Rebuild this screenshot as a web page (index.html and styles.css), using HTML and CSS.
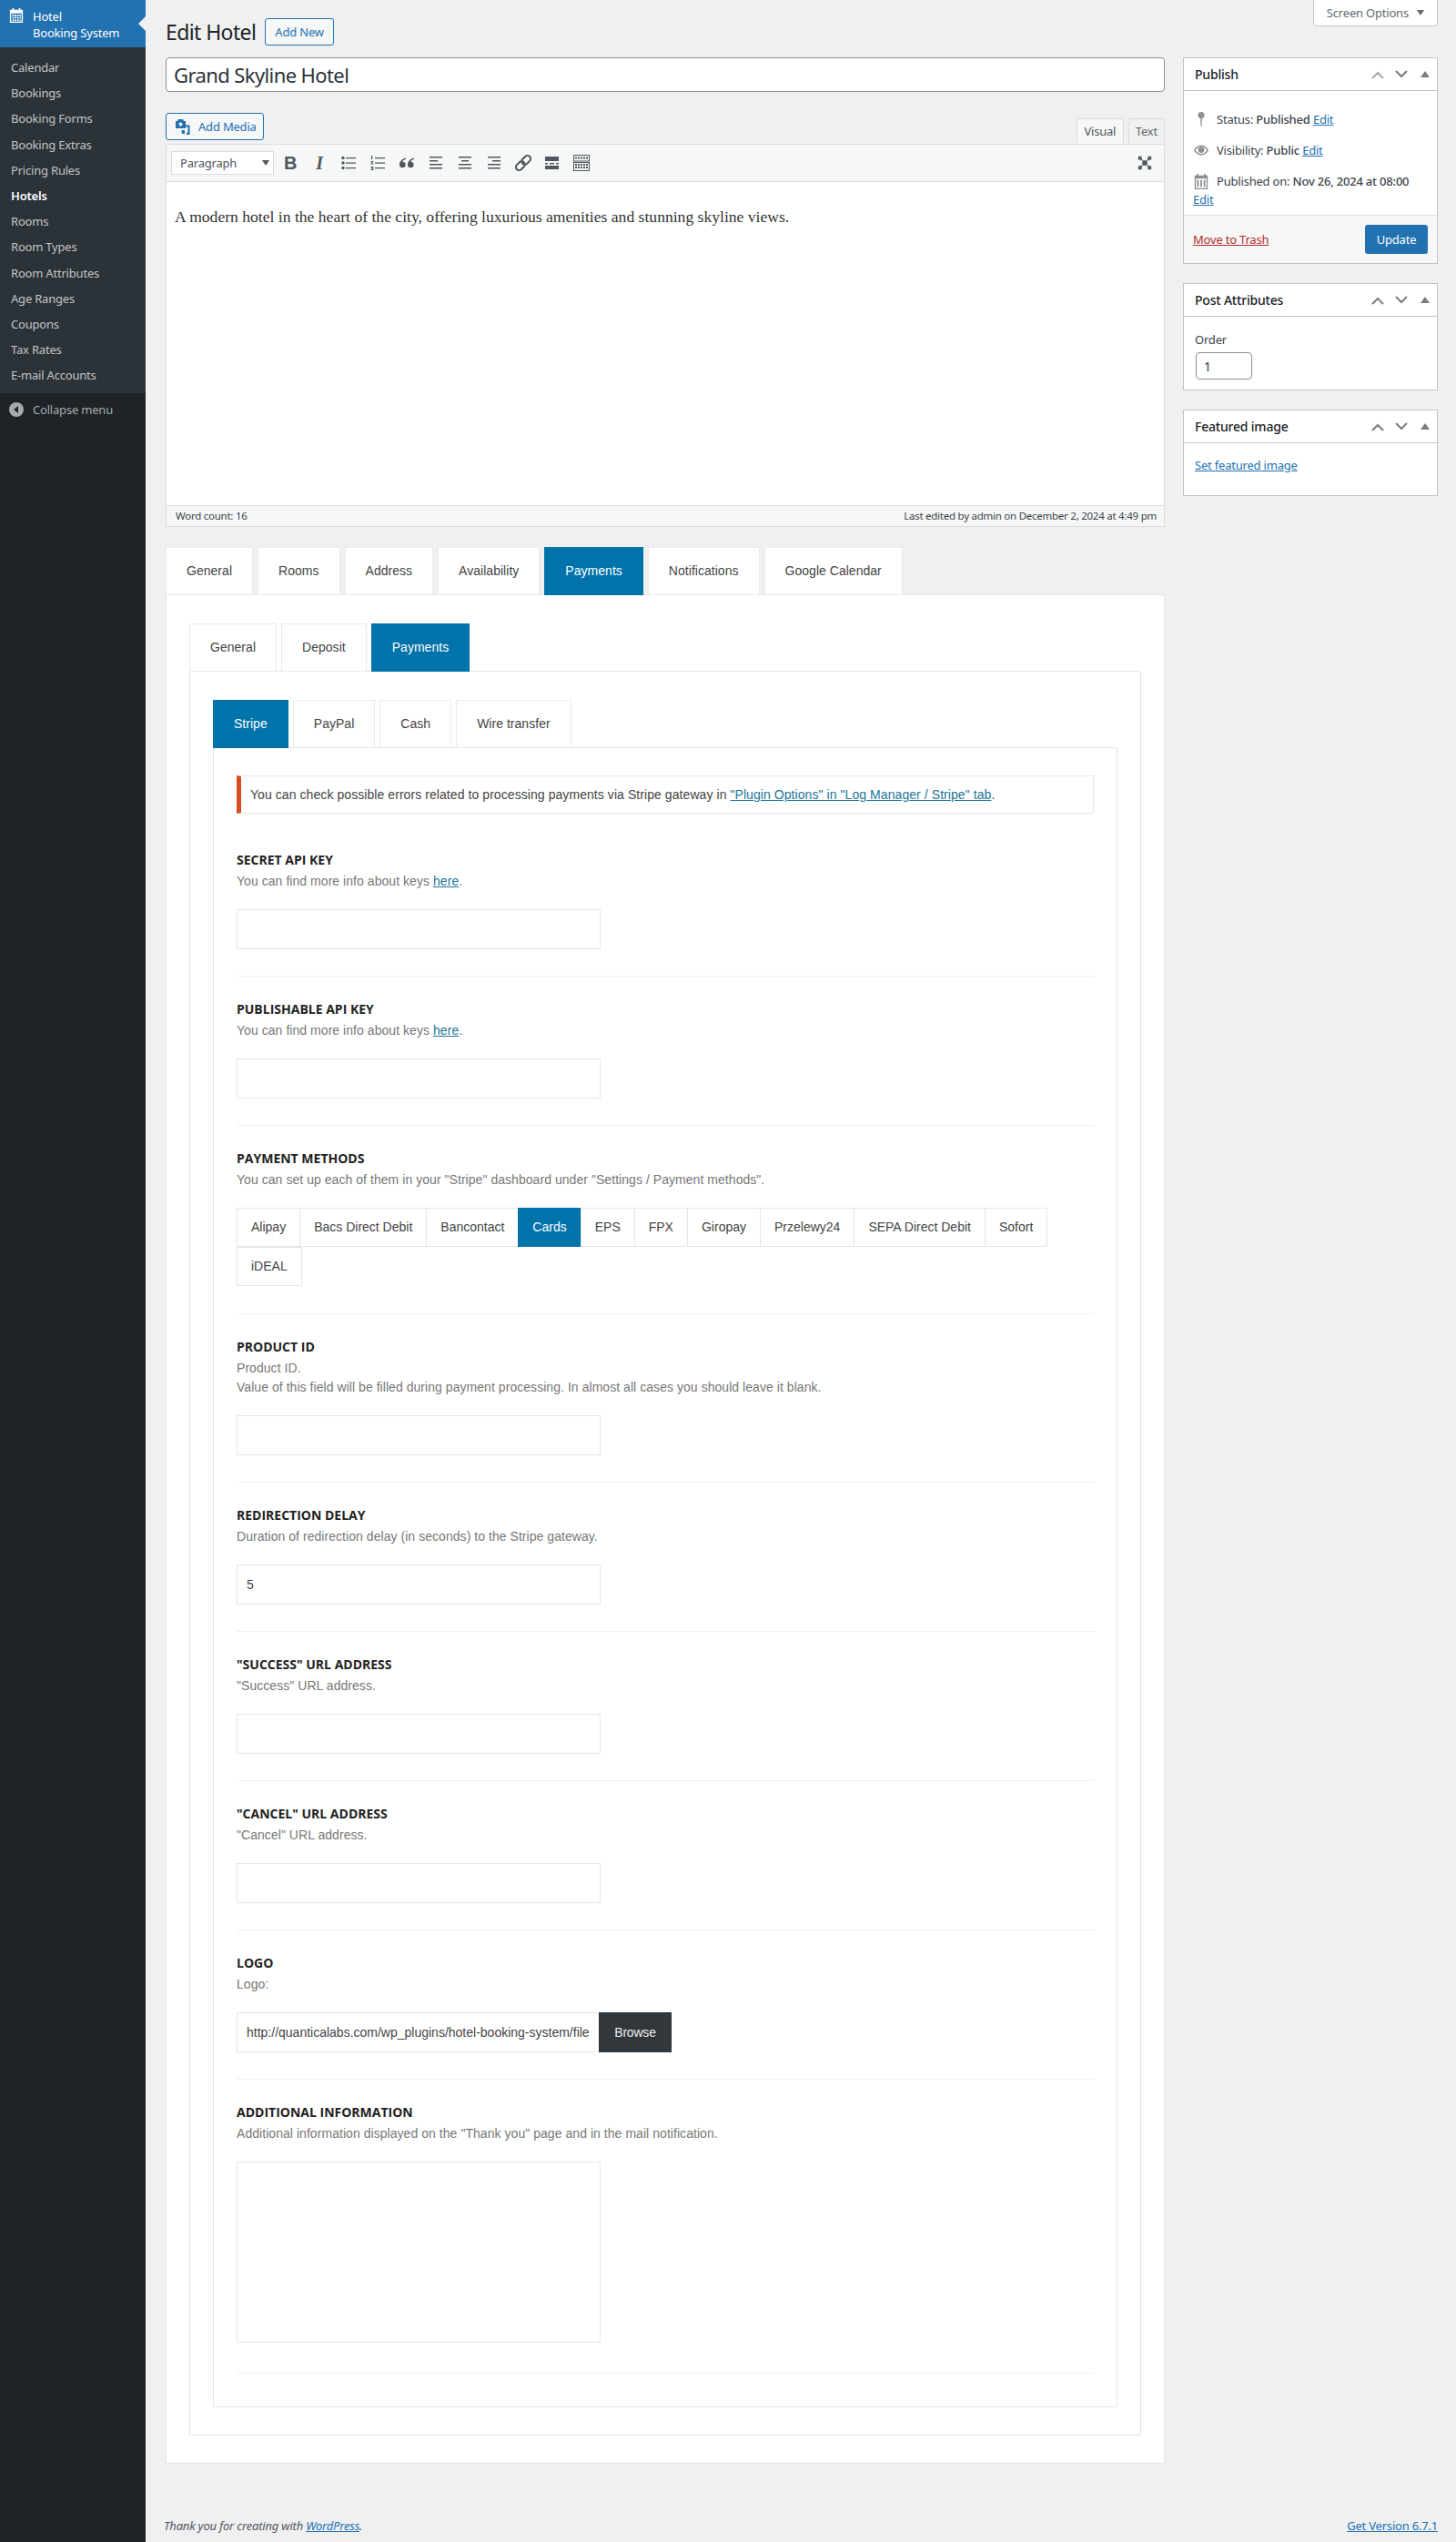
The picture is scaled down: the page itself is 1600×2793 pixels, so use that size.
FILE: index.html
```html
<!DOCTYPE html>
<html lang="en">
<head>
  <meta charset="UTF-8">
  <meta name="viewport" content="width=device-width, initial-scale=1.0">
  <title>Edit Hotel</title>
  <link rel="stylesheet" href="styles.css">
</head>
<body>

<svg class="sprites" width="0" height="0">
  <symbol id="i-up" viewBox="0 0 16 16"><path d="M2 12l6-6 6 6" fill="none" stroke="currentColor" stroke-width="2"/></symbol>
  <symbol id="i-down" viewBox="0 0 16 16"><path d="M2 4l6 6 6-6" fill="none" stroke="currentColor" stroke-width="2"/></symbol>
  <symbol id="i-tri" viewBox="0 0 16 16"><path d="M3 11l5-7 5 7z" fill="currentColor"/></symbol>
</svg>

<aside class="sidebar">
  <div class="brand">
    <svg class="brand-icon" viewBox="0 0 18 20" fill="#fff">
      <path fill-rule="evenodd" d="M1 3h3V1h2v2h6V1h2v2h3v16H1zM2.500 7.500v10h13v-10z"/>
      <path d="M4 9h2v2H4zM7 9h2v2H7zM10 9h2v2h-2zM13 9h1.500v2H13zM4 12h2v2H4zM7 12h2v2H7zM10 12h2v2h-2zM13 12h1.500v2H13zM4 15h2v2H4zM7 15h2v2H7zM10 15h2v2h-2zM13 15h1.500v2H13z"/>
    </svg>
    <div class="brand-name">Hotel<br>Booking System</div>
    <span class="brand-notch"></span>
  </div>
  <ul class="menu">
    <li>Calendar</li>
    <li>Bookings</li>
    <li>Booking Forms</li>
    <li>Booking Extras</li>
    <li>Pricing Rules</li>
    <li class="current">Hotels</li>
    <li>Rooms</li>
    <li>Room Types</li>
    <li>Room Attributes</li>
    <li>Age Ranges</li>
    <li>Coupons</li>
    <li>Tax Rates</li>
    <li>E-mail Accounts</li>
  </ul>
  <div class="collapse">
    <svg class="collapse-icon" viewBox="0 0 16 16"><circle cx="8" cy="8" r="8" fill="#a7aaad"/><path d="M10 4v8L5 8z" fill="#1d2327"/></svg>
    Collapse menu
  </div>
</aside>

<div class="main">
  <button class="screen-options">Screen Options <span class="caret-small"></span></button>

  <div class="columns">
    <div class="content">
      <div class="page-head">
        <h1>Edit Hotel</h1>
        <a class="btn-outline">Add New</a>
      </div>

      <input class="post-title" type="text" value="Grand Skyline Hotel">

      <div class="media-row">
        <a class="btn-outline btn-media">
          <svg class="media-icon" viewBox="0 0 18 18" fill="#2271b1">
            <path fill-rule="evenodd" d="M1 3h2l1-2h5l1 2h2v8H1zM6.500 4.500a2 2 0 1 0 0 4 2 2 0 0 0 0-4z"/>
            <path d="M12 7h5v9.500a1.800 1.800 0 1 1-2-1.800V9h-3zM8 12.500h3.500V15a1.700 1.700 0 1 1-2-1.600V14H8z" transform="translate(-.5 .5)"/>
          </svg>
          Add Media
        </a>
        <div class="editor-tabs">
          <span class="editor-tab active">Visual</span>
          <span class="editor-tab">Text</span>
        </div>
      </div>

      <div class="editor">
        <div class="toolbar">
          <div class="format-select">Paragraph<span class="caret"></span></div>
          <span class="tool tool-b">B</span>
          <span class="tool tool-i">I</span>
          <span class="tool"><svg viewBox="0 0 20 20" fill="#50575e"><circle cx="4" cy="4.500" r="1.700"/><circle cx="4" cy="10" r="1.700"/><circle cx="4" cy="15.500" r="1.700"/><path d="M7 4h11v1.200H7zM7 9.500h11v1.200H7zM7 15h11v1.200H7z"/></svg></span>
          <span class="tool"><svg viewBox="0 0 20 20" fill="#50575e"><path d="M3 2h1.200v4H3zM2.500 8h2.800v1L3.800 10.500h1.500v1H2.500v-1L4 9H2.500zM2.500 14h2.800v4H2.500v-1h1.800v-.6H3v-.8h1.300V15H2.500zM7 4h11v1.200H7zM7 9.500h11v1.200H7zM7 15h11v1.200H7z"/></svg></span>
          <span class="tool"><svg viewBox="0 0 20 20" fill="#50575e"><path d="M9 4.500C5 5.500 2 8 2 12a3.300 3.300 0 1 0 3.300-3.300c0-1 1.300-2.200 3.700-3zM18 4.500c-4 1-7 3.500-7 7.500a3.300 3.300 0 1 0 3.300-3.300c0-1 1.300-2.200 3.700-3z"/></svg></span>
          <span class="tool"><svg viewBox="0 0 20 20" fill="#50575e"><path d="M3 3h14v1.500H3zM3 7h9v1.500H3zM3 11h14v1.500H3zM3 15h14v1.500H3z"/></svg></span>
          <span class="tool"><svg viewBox="0 0 20 20" fill="#50575e"><path d="M3 3h14v1.500H3zM6 7h8v1.500H6zM3 11h14v1.500H3zM3 15h14v1.500H3z"/></svg></span>
          <span class="tool"><svg viewBox="0 0 20 20" fill="#50575e"><path d="M3 3h14v1.500H3zM8 7h9v1.500H8zM3 11h14v1.500H3zM3 15h14v1.500H3z"/></svg></span>
          <span class="tool"><svg viewBox="0 0 20 20" fill="none" stroke="#50575e" stroke-width="2"><g transform="rotate(-45 10 10)"><rect x="0" y="6.500" width="11" height="7" rx="3.500"/><rect x="9" y="6.500" width="11" height="7" rx="3.500"/></g></svg></span>
          <span class="tool"><svg viewBox="0 0 20 20" fill="#50575e"><path d="M2 3h15v5H2zM2 10h3v1.500H2zM7 10h5v1.500H7zM14 10h3v1.500h-3zM2 13h15v4H2z"/></svg></span>
          <span class="tool"><svg viewBox="0 0 20 20" fill="none" stroke="#50575e"><rect x="1.500" y="1.500" width="17" height="6.500"/><rect x="1.500" y="9.500" width="17" height="9"/><path d="M3 4.500h14M3 12h14M3 15h14" stroke-width="2" stroke-dasharray="2 1"/></svg></span>
          <span class="tool tool-full"><svg viewBox="0 0 20 20" fill="#50575e"><path d="M7 7h6v6H7zM2 2h5L5.500 3.500 7.500 5.500 5.500 7.500 3.500 5.500 2 7zM18 2v5l-1.500-1.500-2 2-2-2 2-2L13 2zM2 18v-5l1.500 1.500 2-2 2 2-2 2L7 18zM18 18h-5l1.500-1.500-2-2 2-2 2 2L18 13z"/></svg></span>
        </div>
        <div class="editor-body">
          <p>A modern hotel in the heart of the city, offering luxurious amenities and stunning skyline views.</p>
        </div>
        <div class="editor-status">
          <span>Word count: 16</span>
          <span>Last edited by admin on December 2, 2024 at 4:49 pm</span>
        </div>
      </div>

      <div class="tabs">
        <a class="tab">General</a>
        <a class="tab">Rooms</a>
        <a class="tab">Address</a>
        <a class="tab">Availability</a>
        <a class="tab active">Payments</a>
        <a class="tab">Notifications</a>
        <a class="tab">Google Calendar</a>
      </div>
      <div class="panel">
        <div class="tabs">
          <a class="tab">General</a>
          <a class="tab">Deposit</a>
          <a class="tab active">Payments</a>
        </div>
        <div class="panel">
          <div class="tabs">
            <a class="tab active">Stripe</a>
            <a class="tab">PayPal</a>
            <a class="tab">Cash</a>
            <a class="tab">Wire transfer</a>
          </div>
          <div class="panel panel-last">
            <div class="notice">You can check possible errors related to processing payments via Stripe gateway in <a>"Plugin Options" in "Log Manager / Stripe" tab</a>.</div>

            <div class="field">
              <h4>Secret API key</h4>
              <p class="desc">You can find more info about keys <a>here</a>.</p>
              <input class="text-input" type="text">
            </div>

            <div class="field">
              <h4>Publishable API key</h4>
              <p class="desc">You can find more info about keys <a>here</a>.</p>
              <input class="text-input" type="text">
            </div>

            <div class="field">
              <h4>Payment methods</h4>
              <p class="desc">You can set up each of them in your "Stripe" dashboard under "Settings / Payment methods".</p>
              <div class="methods">
                <span class="method">Alipay</span>
                <span class="method">Bacs Direct Debit</span>
                <span class="method">Bancontact</span>
                <span class="method active">Cards</span>
                <span class="method">EPS</span>
                <span class="method">FPX</span>
                <span class="method">Giropay</span>
                <span class="method">Przelewy24</span>
                <span class="method">SEPA Direct Debit</span>
                <span class="method">Sofort</span>
                <span class="method method-wrap">iDEAL</span>
              </div>
            </div>

            <div class="field">
              <h4>Product ID</h4>
              <p class="desc">Product ID.<br>Value of this field will be filled during payment processing. In almost all cases you should leave it blank.</p>
              <input class="text-input" type="text">
            </div>

            <div class="field">
              <h4>Redirection delay</h4>
              <p class="desc">Duration of redirection delay (in seconds) to the Stripe gateway.</p>
              <input class="text-input" type="text" value="5">
            </div>

            <div class="field">
              <h4>"Success" URL address</h4>
              <p class="desc">"Success" URL address.</p>
              <input class="text-input" type="text">
            </div>

            <div class="field">
              <h4>"Cancel" URL address</h4>
              <p class="desc">"Cancel" URL address.</p>
              <input class="text-input" type="text">
            </div>

            <div class="field">
              <h4>Logo</h4>
              <p class="desc">Logo:</p>
              <div class="browse-row">
                <input class="text-input" type="text" value="http://quanticalabs.com/wp_plugins/hotel-booking-system/files/logo.png">
                <a class="browse">Browse</a>
              </div>
            </div>

            <div class="field field-last">
              <h4>Additional information</h4>
              <p class="desc">Additional information displayed on the "Thank you" page and in the mail notification.</p>
              <textarea class="text-area"></textarea>
            </div>
          </div>
        </div>
      </div>
    </div>

    <div class="side">
      <div class="box">
        <div class="box-head">
          <h2>Publish</h2>
          <span class="handles"><svg class="faded"><use href="#i-up"/></svg><svg><use href="#i-down"/></svg><svg><use href="#i-tri"/></svg></span>
        </div>
        <div class="publish-info">
          <div class="pub-row">
            <svg class="pub-icon" viewBox="0 0 20 20" fill="#8c8f94"><circle cx="10" cy="5" r="4"/><path d="M9 8h2l-.5 11h-1z"/></svg>
            <span>Status: <b>Published</b> <a>Edit</a></span>
          </div>
          <div class="pub-row">
            <svg class="pub-icon" viewBox="0 0 20 20" fill="#8c8f94"><path fill-rule="evenodd" d="M1 10c2-3.500 5-6 9-6s7 2.500 9 6c-2 3.500-5 6-9 6s-7-2.500-9-6zm2 0c1.500 2.500 3.500 4.500 7 4.500s5.500-2 7-4.500c-1.500-2.500-3.500-4.500-7-4.500S4.500 7.500 3 10z"/><circle cx="10" cy="9.500" r="3.800"/></svg>
            <span>Visibility: <b>Public</b> <a>Edit</a></span>
          </div>
          <div class="pub-row pub-date">
            <svg class="pub-icon" viewBox="0 0 20 20" fill="#8c8f94"><path fill-rule="evenodd" d="M2 3h2.500V1h2v2h7V1h2v2H18v17H2zM3.500 7v11.500h13V7z"/><path d="M5 8.500h2v8.500H5zM9 8.500h2v8.500H9zM13 8.500h2v8.500h-2z"/></svg>
            <span>Published on: <b>Nov 26, 2024 at 08:00</b></span>
          </div>
          <a class="pub-edit">Edit</a>
        </div>
        <div class="publish-foot">
          <a class="trash">Move to Trash</a>
          <button class="btn-update">Update</button>
        </div>
      </div>

      <div class="box">
        <div class="box-head">
          <h2>Post Attributes</h2>
          <span class="handles"><svg><use href="#i-up"/></svg><svg><use href="#i-down"/></svg><svg><use href="#i-tri"/></svg></span>
        </div>
        <div class="box-body">
          <label class="order-label">Order</label>
          <input class="order-input" type="text" value="1">
        </div>
      </div>

      <div class="box">
        <div class="box-head">
          <h2>Featured image</h2>
          <span class="handles"><svg><use href="#i-up"/></svg><svg><use href="#i-down"/></svg><svg><use href="#i-tri"/></svg></span>
        </div>
        <div class="box-body featured">
          <a>Set featured image</a>
        </div>
      </div>
    </div>
  </div>

  <footer class="footer">
    <em>Thank you for creating with <a>WordPress</a>.</em>
    <a>Get Version 6.7.1</a>
  </footer>
</div>

</body>
</html>
```

FILE: styles.css
```css
* {
  box-sizing: border-box;
}

body {
  margin: 0;
  display: flex;
  min-height: 100vh;
  font-family: "Noto Sans", sans-serif;
  font-size: 13px;
  line-height: 1.4;
  letter-spacing: -.2px;
  color: #3c434a;
  background-color: #f0f0f1;
}

a {
  color: #2271b1;
  text-decoration: underline;
}

.sprites {
  position: absolute;
}

/* sidebar */
.sidebar {
  width: 160px;
  flex-shrink: 0;
  background-color: #1d2327;
}

.brand {
  position: relative;
  display: flex;
  height: 52px;
  padding: 8px 0 0 10px;
  color: #fff;
  background-color: #2271b1;
}

.brand-icon {
  width: 16px;
  height: 18px;
}

.brand-name {
  margin: 1px 0 0 10px;
  line-height: 18px;
}

.brand-notch {
  position: absolute;
  right: 0;
  top: 18px;
  border: 8px solid transparent;
  border-right-color: #f0f0f1;
  border-left-width: 0;
}

.menu {
  list-style: none;
  margin: 0;
  padding: 8px 0 6px;
  background-color: #2c3338;
}

.menu li {
  padding: 0 12px;
  height: 28.200px;
  line-height: 28.200px;
  font-size: 13px;
  color: #c3c4c7;
}

.menu li.current {
  color: #fff;
  font-weight: 600;
}

.collapse {
  display: flex;
  align-items: center;
  gap: 10px;
  height: 35px;
  padding-left: 10px;
  color: #a7aaad;
}

.collapse-icon {
  width: 16px;
  height: 16px;
}

/* main */
.main {
  position: relative;
  flex: 1;
  display: flex;
  flex-direction: column;
  padding: 0 20px 8px 22px;
}

.screen-options {
  position: absolute;
  top: -1px;
  right: 20px;
  width: 137px;
  height: 30px;
  font-family: "Noto Sans", sans-serif;
  font-size: 13px;
  letter-spacing: -.2px;
  color: #646970;
  background-color: #fff;
  border: 1px solid #c3c4c7;
  border-radius: 0 0 4px 4px;
}

.caret-small {
  display: inline-block;
  margin-left: 6px;
  vertical-align: 2px;
  border: 4px solid transparent;
  border-top: 6px solid #646970;
  border-bottom-width: 0;
}

.columns {
  display: grid;
  grid-template-columns: 1098px 280px;
  gap: 20px;
}

.page-head {
  display: flex;
  align-items: center;
  gap: 10px;
  height: 30px;
  margin: 20px 0 13px;
}

h1 {
  margin: 0;
  font-size: 23px;
  font-weight: 400;
  letter-spacing: -.6px;
  color: #1d2327;
}

.btn-outline {
  display: inline-flex;
  align-items: center;
  height: 30px;
  padding: 0 10px;
  font-size: 13px;
  color: #2271b1;
  text-decoration: none;
  background-color: #f6f7f7;
  border: 1px solid #2271b1;
  border-radius: 3px;
}

.post-title {
  display: block;
  width: 100%;
  height: 38px;
  padding: 3px 8px;
  font-family: "Noto Sans", sans-serif;
  font-size: 22px;
  letter-spacing: -.6px;
  color: #2c3338;
  background-color: #fff;
  border: 1px solid #8c8f94;
  border-radius: 4px;
}

.media-row {
  display: flex;
  justify-content: space-between;
  height: 34px;
  margin-top: 23px;
}

.btn-media {
  gap: 8px;
  padding: 0 7px 0 9px;
}

.media-icon {
  width: 18px;
  height: 18px;
}

.editor-tabs {
  display: flex;
  align-items: flex-end;
  gap: 5px;
}

.editor-tab {
  height: 28px;
  padding: 0 7px;
  line-height: 27px;
  font-size: 13px;
  color: #646970;
  background-color: #f0f0f1;
  border: 1px solid #dcdcde;
  border-bottom: none;
}

.editor-tab.active {
  width: 52px;
  text-align: center;
  color: #50575e;
  background-color: #f6f7f7;
  border-color: #dcdcde;
}

.editor {
  background-color: #fff;
  border: 1px solid #dcdcde;
}

.toolbar {
  display: flex;
  align-items: center;
  height: 41px;
  padding-left: 5px;
  background-color: #f6f7f7;
  border-bottom: 1px solid #dcdcde;
}

.format-select {
  position: relative;
  width: 113px;
  height: 26px;
  margin-right: 4px;
  padding-left: 9px;
  line-height: 24px;
  color: #50575e;
  background-color: #fff;
  border: 1px solid #dcdcde;
}

.caret {
  position: absolute;
  right: 4px;
  top: 9px;
  border: 4px solid transparent;
  border-top: 6px solid #50575e;
  border-bottom-width: 0;
}

.tool {
  display: flex;
  align-items: center;
  justify-content: center;
  width: 28px;
  height: 28px;
  margin-right: 4px;
}

.tool svg {
  width: 20px;
  height: 20px;
}

.tool-b {
  font-family: "Liberation Sans", sans-serif;
  font-size: 20px;
  font-weight: 700;
  color: #50575e;
}

.tool-i {
  font-family: "Liberation Serif", serif;
  font-size: 20px;
  font-weight: 700;
  font-style: italic;
  color: #50575e;
}

.tool-full {
  margin-left: auto;
  margin-right: 7px;
}

.tool-full svg {
  width: 18px;
  height: 18px;
}

.editor-body {
  height: 355px;
  padding: 29px 9px 0;
}

.editor-body p {
  margin: 0;
  font-family: "Liberation Serif", serif;
  font-size: 17.600px;
  line-height: 19px;
  letter-spacing: 0;
  color: #333;
}

.editor-status {
  display: flex;
  justify-content: space-between;
  height: 23px;
  padding: 0 8px 0 10px;
  line-height: 22px;
  font-size: 11.500px;
  letter-spacing: -.25px;
  color: #3c434a;
  background-color: #f6f7f7;
  border-top: 1px solid #dcdcde;
}

/* tabs */
.tabs {
  position: relative;
  display: flex;
  gap: 5px;
  margin-bottom: -1px;
}

.content > .tabs {
  margin-top: 22px;
}

.tab {
  position: relative;
  height: 53px;
  padding: 0 22px;
  line-height: 51px;
  font-family: "Liberation Sans", sans-serif;
  font-size: 14px;
  letter-spacing: .03px;
  color: #444;
  text-decoration: none;
  background-color: #fff;
  border: 1px solid #eaeaea;
}

.tab.active {
  color: #fff;
  background-color: #0073aa;
  border-color: #0073aa;
}

.panel {
  padding: 31px 25px 30px;
  background-color: #fff;
  border: 1px solid #e6e6e6;
}

.panel-last {
  padding: 30px 25px 36px;
}

.notice {
  height: 42px;
  padding-left: 10px;
  line-height: 40px;
  font-family: "Liberation Sans", sans-serif;
  font-size: 14px;
  letter-spacing: .07px;
  color: #444;
  border: 1px solid #e6e6e6;
  border-left: 5px solid #d54e21;
}

.notice a,
.desc a {
  color: #21759b;
}

.field {
  padding: 26px 0 29px;
  border-bottom: 1px solid #f0f0f0;
}

.notice + .field {
  padding-top: 41px;
}

.field-last {
  padding-bottom: 33px;
}

h4 {
  margin: 0 0 3px;
  font-family: "Open Sans", sans-serif;
  font-size: 14px;
  line-height: 20px;
  font-weight: 700;
  letter-spacing: 0;
  color: #222;
  text-transform: uppercase;
}

.desc {
  margin: 0 0 20px;
  font-family: "Liberation Sans", sans-serif;
  font-size: 14px;
  line-height: 21px;
  letter-spacing: .05px;
  color: #777;
}

.text-input {
  display: block;
  width: 400px;
  height: 44px;
  padding: 0 10px;
  font-family: "Liberation Sans", sans-serif;
  font-size: 14px;
  color: #444;
  background-color: #fff;
  border: 1px solid #e6e6e6;
}

.browse-row {
  display: flex;
}

.browse-row .text-input {
  width: 398px;
  border-right: none;
}

.browse {
  width: 80px;
  height: 44px;
  line-height: 44px;
  text-align: center;
  font-family: "Liberation Sans", sans-serif;
  font-size: 14px;
  color: #eee;
  text-decoration: none;
  background-color: #32373c;
}

.text-area {
  display: block;
  width: 400px;
  height: 199px;
  background-color: #fff;
  border: 1px solid #e6e6e6;
  resize: none;
}

.methods {
  display: flex;
  flex-wrap: wrap;
  margin-bottom: 1px;
}

.method {
  height: 43px;
  margin-right: -1px;
  padding: 0 15px;
  line-height: 41px;
  font-family: "Liberation Sans", sans-serif;
  font-size: 14px;
  letter-spacing: 0;
  color: #444;
  background-color: #fff;
  border: 1px solid #e6e6e6;
}

.method.active {
  color: #fff;
  background-color: #0073aa;
  border-color: #0073aa;
}

/* side boxes */
.side {
  padding-top: 63px;
}

.box {
  margin-bottom: 21px;
  background-color: #fff;
  border: 1px solid #c3c4c7;
}

.box-head {
  display: flex;
  align-items: center;
  justify-content: space-between;
  height: 36px;
  padding-left: 12px;
  border-bottom: 1px solid #c3c4c7;
}

.box-head h2 {
  margin: 0;
  font-size: 14px;
  font-weight: 500;
  letter-spacing: -.2px;
  color: #1d2327;
}

.handles {
  display: flex;
  gap: 10px;
  margin-right: 5px;
  color: #787c82;
}

.handles svg {
  width: 16px;
  height: 16px;
}

.handles svg.faded {
  color: #a7aaad;
}

.publish-info {
  padding: 21px 10px 0;
}

.pub-row {
  display: flex;
  align-items: center;
  gap: 8px;
  height: 20px;
  margin-bottom: 14px;
}

.pub-date {
  margin-bottom: 0;
}

.pub-icon {
  width: 18px;
  height: 18px;
}

.pub-row b {
  font-weight: 500;
}

.pub-edit {
  display: block;
  height: 27px;
  line-height: 20px;
}

.publish-foot {
  display: flex;
  align-items: center;
  justify-content: space-between;
  height: 53px;
  padding: 0 10px;
  background-color: #f6f7f7;
  border-top: 1px solid #dcdcde;
}

.trash {
  color: #b32d2e;
}

.btn-update {
  width: 69px;
  height: 32px;
  font-family: "Noto Sans", sans-serif;
  font-size: 13px;
  letter-spacing: -.2px;
  color: #fff;
  background-color: #2271b1;
  border: none;
  border-radius: 3px;
}

.box-body {
  padding: 15px 12px 11px;
}

.order-label {
  display: block;
  height: 24px;
  line-height: 20px;
}

.order-input {
  display: block;
  width: 62px;
  height: 30px;
  margin-left: 1px;
  padding: 0 8px;
  font-family: "Noto Sans", sans-serif;
  font-size: 14px;
  color: #2c3338;
  background-color: #fff;
  border: 1px solid #8c8f94;
  border-radius: 4px;
}

.featured {
  height: 57px;
}

.footer {
  display: flex;
  justify-content: space-between;
  margin-top: auto;
  margin-left: -2px;
  line-height: 20px;
  color: #50575e;
}
```
